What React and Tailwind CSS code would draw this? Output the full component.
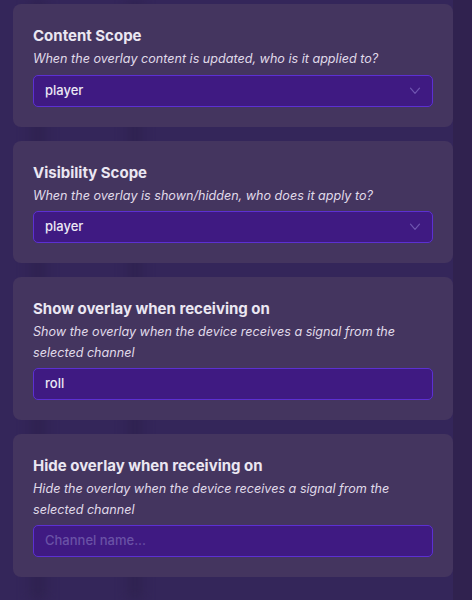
import React from "react";

function Chevron() {
  return (
    <svg width="12" height="8" viewBox="0 0 12 8" fill="none" className="shrink-0">
      <path d="M1.5 1.2 L6 6.4 L10.5 1.2" stroke="#6f55b0" strokeWidth="1.2" strokeLinecap="round" strokeLinejoin="round" />
    </svg>
  );
}

function Card({ title, desc, children }) {
  return (
    <div className="rounded-[8px] bg-[#44355f] px-5 pt-5 pb-5">
      <div className="text-[15px] leading-[23px] font-bold text-[#ebe7f2]">{title}</div>
      <div className="mt-[2px] text-[12.6px] leading-[20.5px] italic text-[#e0dbea]">{desc}</div>
      <div className="mt-[5px]">{children}</div>
    </div>
  );
}

function Select({ value }) {
  return (
    <div className="flex h-[32px] items-center justify-between rounded-[5px] border border-[#5c30d2] bg-[#3f1a82] pl-[11px] pr-[11px]">
      <span className="text-[13px] font-medium text-[#ece8f5]">{value}</span>
      <Chevron />
    </div>
  );
}

function Input({ value, placeholder }) {
  return (
    <div className="flex h-[32px] items-center rounded-[5px] border border-[#5c30d2] bg-[#3f1a82] pl-[11px]">
      {value ? (
        <span className="text-[13px] font-medium text-[#ece8f5]">{value}</span>
      ) : (
        <span className="text-[13px] font-medium text-[#6a52a6]">{placeholder}</span>
      )}
    </div>
  );
}

export default function App() {
  return (
    <div
      className="relative h-[600px] w-[472px] overflow-hidden bg-[#34265a]"
      style={{ fontFamily: "Inter, 'Noto Sans', sans-serif" }}
    >
      <div className="pointer-events-none absolute left-[30px] top-0 h-full w-[16px] bg-[#2f2250] blur-[6px]" />
      <div className="pointer-events-none absolute left-[128px] top-0 h-full w-[14px] bg-[#2f2250] blur-[6px]" />
      <div className="pointer-events-none absolute left-[453px] top-0 h-full w-[19px] bg-[#30224f]" />
      <div className="relative flex flex-col gap-[14px] px-[13px] pt-[4px] w-[466px]">
        <Card title="Content Scope" desc="When the overlay content is updated, who is it applied to?">
          <Select value="player" />
        </Card>
        <Card title="Visibility Scope" desc="When the overlay is shown/hidden, who does it apply to?">
          <Select value="player" />
        </Card>
        <Card
          title="Show overlay when receiving on"
          desc="Show the overlay when the device receives a signal from the selected channel"
        >
          <Input value="roll" />
        </Card>
        <Card
          title="Hide overlay when receiving on"
          desc="Hide the overlay when the device receives a signal from the selected channel"
        >
          <Input placeholder="Channel name..." />
        </Card>
      </div>
    </div>
  );
}
